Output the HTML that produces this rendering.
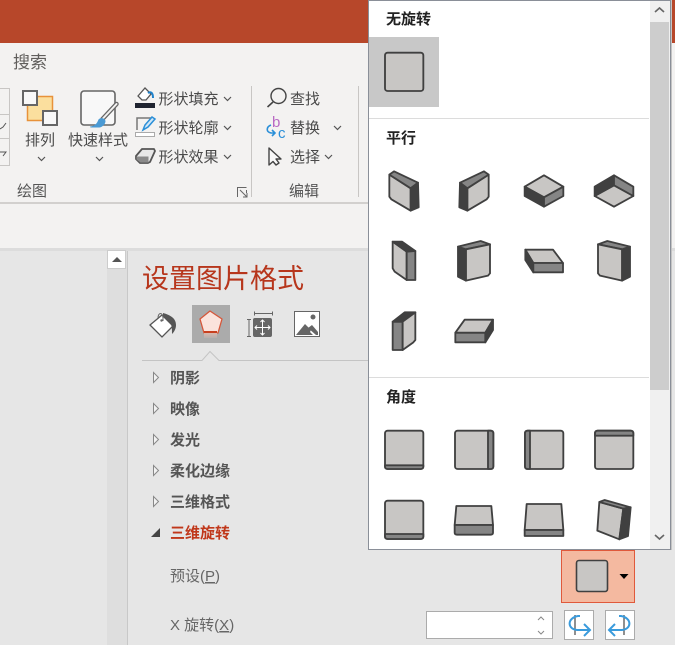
<!DOCTYPE html>
<html><head><meta charset="utf-8">
<style>
html,body{margin:0;padding:0;width:675px;height:645px;overflow:hidden;background:#e6e6e6}
svg{display:block}
text{font-family:"Liberation Sans","Noto Sans CJK SC",sans-serif}
.r{font-size:15px;fill:#4a4a4a}
.h{font-size:15px;font-weight:700;fill:#222}
.i{font-size:15px;font-weight:700;fill:#555}
.l{font-size:15px;fill:#666}
.f{fill:#c8c6c4}.m{fill:#858585}.d{fill:#404040}
.ic *{stroke:#404040;stroke-width:5.5;stroke-linejoin:round}
.ch{fill:none;stroke:#555;stroke-width:1.2}
</style></head><body>
<svg width="675" height="645" viewBox="0 0 675 645" xmlns="http://www.w3.org/2000/svg">
<defs>
<linearGradient id="pg" x1="0" y1="0" x2="0" y2="1"><stop offset="0" stop-color="#d8b8ae"/><stop offset="1" stop-color="#b5b0ae"/></linearGradient>
</defs>
<rect width="675" height="645" fill="#e6e6e6"/>
<!-- ribbon -->
<rect width="675" height="43" fill="#b7472a"/>
<rect y="43" width="675" height="205" fill="#f3f2f1"/>
<rect y="202" width="675" height="2" fill="#d2d0ce"/>
<rect y="248" width="675" height="3" fill="#dcdcdc"/>
<text x="13" y="68" font-size="17" fill="#605e5c">搜索</text>
<!-- left partial buttons -->
<path d="M0 88.500H9.500V165.500H0M0 114.500H9.500M0 138.500H9.500" fill="none" stroke="#c8c6c4"/>
<path d="M0 129l3-2 3-4M0 152h6l-3 4" fill="none" stroke="#555"/>
<!-- arrange icon -->
<rect x="27.500" y="96.500" width="25" height="24" fill="#fbdf9e" stroke="#e8923a" stroke-width="1.500"/>
<rect x="23" y="91" width="14" height="14" fill="#f8f8f8" stroke="#666" stroke-width="2"/>
<rect x="43" y="111" width="14" height="14" fill="#f8f8f8" stroke="#666" stroke-width="2"/>
<text class="r" x="25" y="145">排列</text>
<path class="ch" d="M38 157l3.500 3.500 3.500-3.500"/>
<!-- quick style -->
<rect x="81" y="91" width="34" height="34" rx="3" fill="#f8f8f8" stroke="#666" stroke-width="1.600"/>
<path d="M116.500 104l-14 15" stroke="#666" stroke-width="4.500" stroke-linecap="round"/>
<path d="M116.500 104l-14 15" stroke="#f3f2f1" stroke-width="2" stroke-linecap="round"/>
<path d="M90 126.500c5-.5 7-3 8.500-7 2-2.500 6.500-1.500 7 1.500 0 3-3 6-6 6.500h-9z" fill="#4a9ad4"/>
<text class="r" x="68" y="145">快速样式</text>
<path class="ch" d="M96 157l3.500 3.500 3.500-3.500"/>
<!-- fill -->
<rect x="135" y="103" width="20" height="5" fill="#1f2430"/>
<path d="M138 96l7-8 6 6-5 6h-4z" fill="#fff" stroke="#555" stroke-width="1.300"/>
<path d="M148 93c3-2 5 0 5 5" fill="none" stroke="#1e82cc" stroke-width="2"/>
<text class="r" x="158.500" y="104">形状填充</text>
<path class="ch" d="M224 97l3.500 3.500 3.500-3.500"/>
<!-- outline -->
<path d="M137 130v-12h15" fill="none" stroke="#777" stroke-width="1.500"/>
<path d="M143 130l2-5 7-8 3 2-7 8z" fill="#cfe6f7" stroke="#2a8fd8" stroke-width="1.500"/>
<rect x="135.500" y="132.500" width="19" height="4" fill="#fff" stroke="#aaa"/>
<text class="r" x="158.500" y="133">形状轮廓</text>
<path class="ch" d="M224 126l3.500 3.500 3.500-3.500"/>
<!-- effect -->
<path d="M136 156l6-7h12l1 2-5 11-2 1h-8l-4-4z" fill="#e8e8e8" stroke="#555" stroke-width="1.800" stroke-linejoin="round"/>
<path d="M136.500 156.500h12v6h-8l-4-3z" fill="#8a8a8a"/>
<text class="r" x="158.500" y="162">形状效果</text>
<path class="ch" d="M224 155l3.500 3.500 3.500-3.500"/>
<text x="17" y="196" font-size="15" fill="#555">绘图</text>
<path d="M237.500 197v-9.500H246.500M240 190l7 7M247 193v4h-4M246.500 190v3" fill="none" stroke="#666"/>
<rect x="251" y="86" width="1" height="111" fill="#c8c6c4"/>
<rect x="358" y="86" width="1" height="111" fill="#c8c6c4"/>
<!-- find -->
<circle cx="278.500" cy="96" r="7.500" fill="none" stroke="#444" stroke-width="1.400"/>
<path d="M273 102l-5.500 5" stroke="#444" stroke-width="1.600"/>
<text class="r" x="290" y="104">查找</text>
<text x="272" y="127" font-size="15" fill="#b96ac4">b</text>
<text x="278" y="138" font-size="15" fill="#2a8fd8">c</text>
<path d="M271 125c-5 2-5 7 0 8h4M272 130l3 3-3 3" fill="none" stroke="#2a8fd8" stroke-width="1.600"/>
<text class="r" x="290" y="133">替换</text>
<path class="ch" d="M334 126l3.500 3.500 3.500-3.500"/>
<path d="M269 148v17l4-3.500 3 3.500 3-2-3-4h5z" fill="#f8f8f8" stroke="#444" stroke-width="1.400" stroke-linejoin="round"/>
<text class="r" x="290" y="162">选择</text>
<path class="ch" d="M325 155l3.500 3.500 3.500-3.500"/>
<text x="289" y="196" font-size="15" fill="#555">编辑</text>
<!-- panel -->
<rect x="107" y="251" width="20" height="394" fill="#dedede"/>
<rect x="127" y="251" width="1" height="394" fill="#c8c8c8"/>
<rect x="107.500" y="250.500" width="18" height="18" fill="#fff" stroke="#ccc"/>
<path d="M112 262l5-5 5 5z" fill="#555"/>
<text x="142" y="288" font-size="27" fill="#b7361c">设置图片格式</text>
<!-- pane tab icons -->
<path d="M150 325l12-10 11 11-11 11z" fill="#fff" stroke="#555" stroke-width="1.300"/>
<path d="M158 318c0-6 5-6 5 0v3" fill="none" stroke="#666"/>
<circle cx="161.500" cy="320.500" r="1.200" fill="#666"/>
<path d="M163 313c7 2 13 5 13 12 0 4-2 7-4 9 0-5 0-9-2-11l-7-7z" fill="#555"/>
<rect x="192" y="305" width="38" height="38" fill="#ababab"/>
<path d="M210 311l12 8-4 14h-14l-4-14z" fill="#fbe3dc" stroke="#d6573a" stroke-width="1.300" stroke-linejoin="round"/>
<rect x="204" y="331" width="13" height="2" fill="#c8401f"/>
<rect x="204" y="333" width="13" height="5" fill="url(#pg)"/>
<path d="M254.500 313.500h18M254.500 311.500v4M272.500 311.500v4M247 319.500h4M247 336.500h4M249 319.500v17" fill="none" stroke="#666"/>
<rect x="253" y="318" width="19" height="19" rx="2" fill="#666"/>
<path d="M262.500 320v15M255 327.500h15M260.500 322l2-2 2 2M260.500 333l2 2 2-2M257 325.500l-2 2 2 2M268 325.500l2 2-2 2" fill="none" stroke="#fff"/>
<rect x="294.500" y="311.500" width="25" height="25" fill="#fff" stroke="#666"/>
<circle cx="313" cy="317" r="2.500" fill="#666"/>
<path d="M296 335l9-11 6 6 -1 2 3 3z" fill="#666"/>
<path d="M308 328l4-3 6 7v3h-2z" fill="#666"/>
<path d="M142 360.500H202l8-9 9 9H368" fill="none" stroke="#c4c4c4"/>
<!-- accordion -->
<g fill="#f2f2f2" stroke="#888">
<path d="M153.500 372.500v10l5-5z"/><path d="M153.500 403.500v10l5-5z"/><path d="M153.500 434.500v10l5-5z"/><path d="M153.500 465.500v10l5-5z"/><path d="M153.500 496.500v10l5-5z"/>
</g>
<path d="M151 537l9-9v9z" fill="#444"/>
<text class="i" x="170" y="383">阴影</text>
<text class="i" x="170" y="414">映像</text>
<text class="i" x="170" y="445">发光</text>
<text class="i" x="170" y="476">柔化边缘</text>
<text class="i" x="170" y="507">三维格式</text>
<text class="i" x="170" y="538" style="fill:#c0371a">三维旋转</text>
<text class="l" x="170" y="581">预设(<tspan text-decoration="underline">P</tspan>)</text>
<text class="l" x="170" y="630">X 旋转(<tspan text-decoration="underline">X</tspan>)</text>
<!-- preset button -->
<rect x="561.500" y="550.500" width="73" height="52" fill="#f4b9a0" stroke="#e0593b"/>
<rect x="576.500" y="560.500" width="31" height="31" rx="2.500" fill="#c8c6c4" stroke="#404040" stroke-width="1.600"/>
<path d="M619.500 574h9l-4.500 5z" fill="#000"/>
<!-- input -->
<rect x="426.500" y="611.500" width="126" height="27" fill="#fff" stroke="#ababab"/>
<path d="M538 620l3-3 3 3M538 631l3 3 3-3" fill="none" stroke="#888"/>
<rect x="564.500" y="610.500" width="29" height="29" fill="#fff" stroke="#ababab"/>
<rect x="605.500" y="610.500" width="29" height="29" fill="#fff" stroke="#ababab"/>
<path d="M575 615v20" stroke="#555" stroke-width="1.300"/>
<path d="M580 616h-2c-11 2-11 13-1 14h12M584 624l6 6-6 6" fill="none" stroke="#3a9bdc" stroke-width="2"/>
<path d="M624 615v20" stroke="#555" stroke-width="1.300"/>
<path d="M619 616h2c11 2 11 13 1 14h-12M615 624l-6 6 6 6" fill="none" stroke="#3a9bdc" stroke-width="2"/>
<!-- popup -->
<rect x="671" y="43" width="4" height="205" fill="#f3f2f1"/>
<rect x="671" y="0" width="1" height="550" fill="#c4c4c4"/>
<rect x="368.500" y="0.500" width="302" height="549" fill="#fff" stroke="#8a8f98"/>
<rect x="650" y="1" width="20" height="548" fill="#f0f0f0"/>
<rect x="650" y="22" width="19" height="368" fill="#cdcdcd"/>
<path d="M655 12l4.500-4 4.500 4M655 535l4.500 4 4.500-4" fill="none" stroke="#666" stroke-width="1.600"/>
<text class="h" x="386" y="24">无旋转</text>
<rect x="369" y="37" width="70" height="70" fill="#c8c8c8"/>
<rect x="369" y="118" width="280" height="1" fill="#dcdcdc"/>
<text class="h" x="386" y="143">平行</text>
<rect x="369" y="377" width="280" height="1" fill="#dcdcdc"/>
<text class="h" x="386" y="402">角度</text>
<g class="ic" transform="translate(368,0) scale(.33333)">
<rect class="f" x="51" y="158" width="115" height="115" rx="8"/>
<path class="f" d="M64 524L128 565V632L70 598L64 590Z"/>
<path class="m" d="M64 524L78 514L150 548L128 565Z"/>
<path class="d" d="M128 565L150 548L152 622L128 632Z"/>
<path class="f" d="M362 524L298 565V632L356 598L362 590Z"/>
<path class="m" d="M362 524L348 514L276 548L298 565Z"/>
<path class="d" d="M298 565L276 548L274 622L298 632Z"/>
<path class="f" d="M528 526L586 560L528 592L470 560Z"/>
<path class="d" d="M470 560L528 592V620L470 588Z"/>
<path class="m" d="M528 592L586 560V588L528 620Z"/>
<path class="f" d="M738 556L796 588L738 620L680 588Z"/>
<path class="d" d="M680 560L738 526V556L680 588Z"/>
<path class="m" d="M738 526L796 560V588L738 556Z"/>
</g>
<g class="ic" transform="translate(368,225) scale(.33333)">
<path class="f" d="M74 50L116 80V165L80 140L74 130Z"/>
<path class="d" d="M74 50H102L142 78L116 80Z"/>
<path class="m" d="M116 80L142 78V165H116Z"/>
<path class="d" d="M270 65L294 73V167L270 155Z"/>
<path class="m" d="M270 65L338 48L366 58L294 73Z"/>
<path class="f" d="M294 73L366 58V145L360 152L294 167Z"/>
<path class="f" d="M472 74H555L585 114H496Z"/>
<path class="d" d="M472 74L496 114V142L472 105Z"/>
<path class="m" d="M496 114H585V142H496Z"/>
<path class="d" d="M786 65L762 73V167L786 155Z"/>
<path class="m" d="M786 65L718 48L690 58L762 73Z"/>
<path class="f" d="M762 73L690 58V145L696 152L762 167Z"/>
<path class="m" d="M74 290H104V375H74Z"/>
<path class="d" d="M74 290L110 262H142L104 290Z"/>
<path class="f" d="M104 290L142 262V345L136 352L104 375Z"/>
<path class="m" d="M262 323H352V352H262Z"/>
<path class="f" d="M262 323L290 284H375L352 323Z"/>
<path class="d" d="M352 323L375 284V315L352 352Z"/>
</g>
<g class="ic" transform="translate(368,380) scale(.33333)">
<rect class="f" x="51" y="152" width="115" height="115" rx="8"/>
<path class="m" d="M51 256H166V260Q166 267 158 267H59Q51 267 51 260Z"/>
<rect class="f" x="261" y="152" width="115" height="115" rx="8"/>
<path class="m" d="M360 152H368Q376 152 376 160V259Q376 267 368 267H360Z"/>
<rect class="f" x="471" y="152" width="115" height="115" rx="8"/>
<path class="m" d="M486 152H479Q471 152 471 160V259Q471 267 479 267H486Z"/>
<rect class="f" x="681" y="152" width="115" height="115" rx="8"/>
<path class="m" d="M681 167V160Q681 152 689 152H788Q796 152 796 160V167Z"/>
<rect class="f" x="51" y="362" width="115" height="115" rx="8"/>
<path class="m" d="M51 462H166V470Q166 477 158 477H59Q51 477 51 470Z"/>
<path class="f" d="M265 378H370L375 435H260Z"/>
<path class="m" d="M260 435H375V458Q375 464 368 464H267Q260 464 260 458Z"/>
<path class="f" d="M476 372H580L586 450H470Z"/>
<path class="m" d="M470 450H586V468H470Z"/>
<path class="f" d="M694 366L766 386L754 478L688 452Z"/>
<path class="m" d="M694 366L710 360L788 382L766 386Z"/>
<path class="d" d="M766 386L788 382L780 468L754 478Z"/>
</g>
</svg>
</body></html>
